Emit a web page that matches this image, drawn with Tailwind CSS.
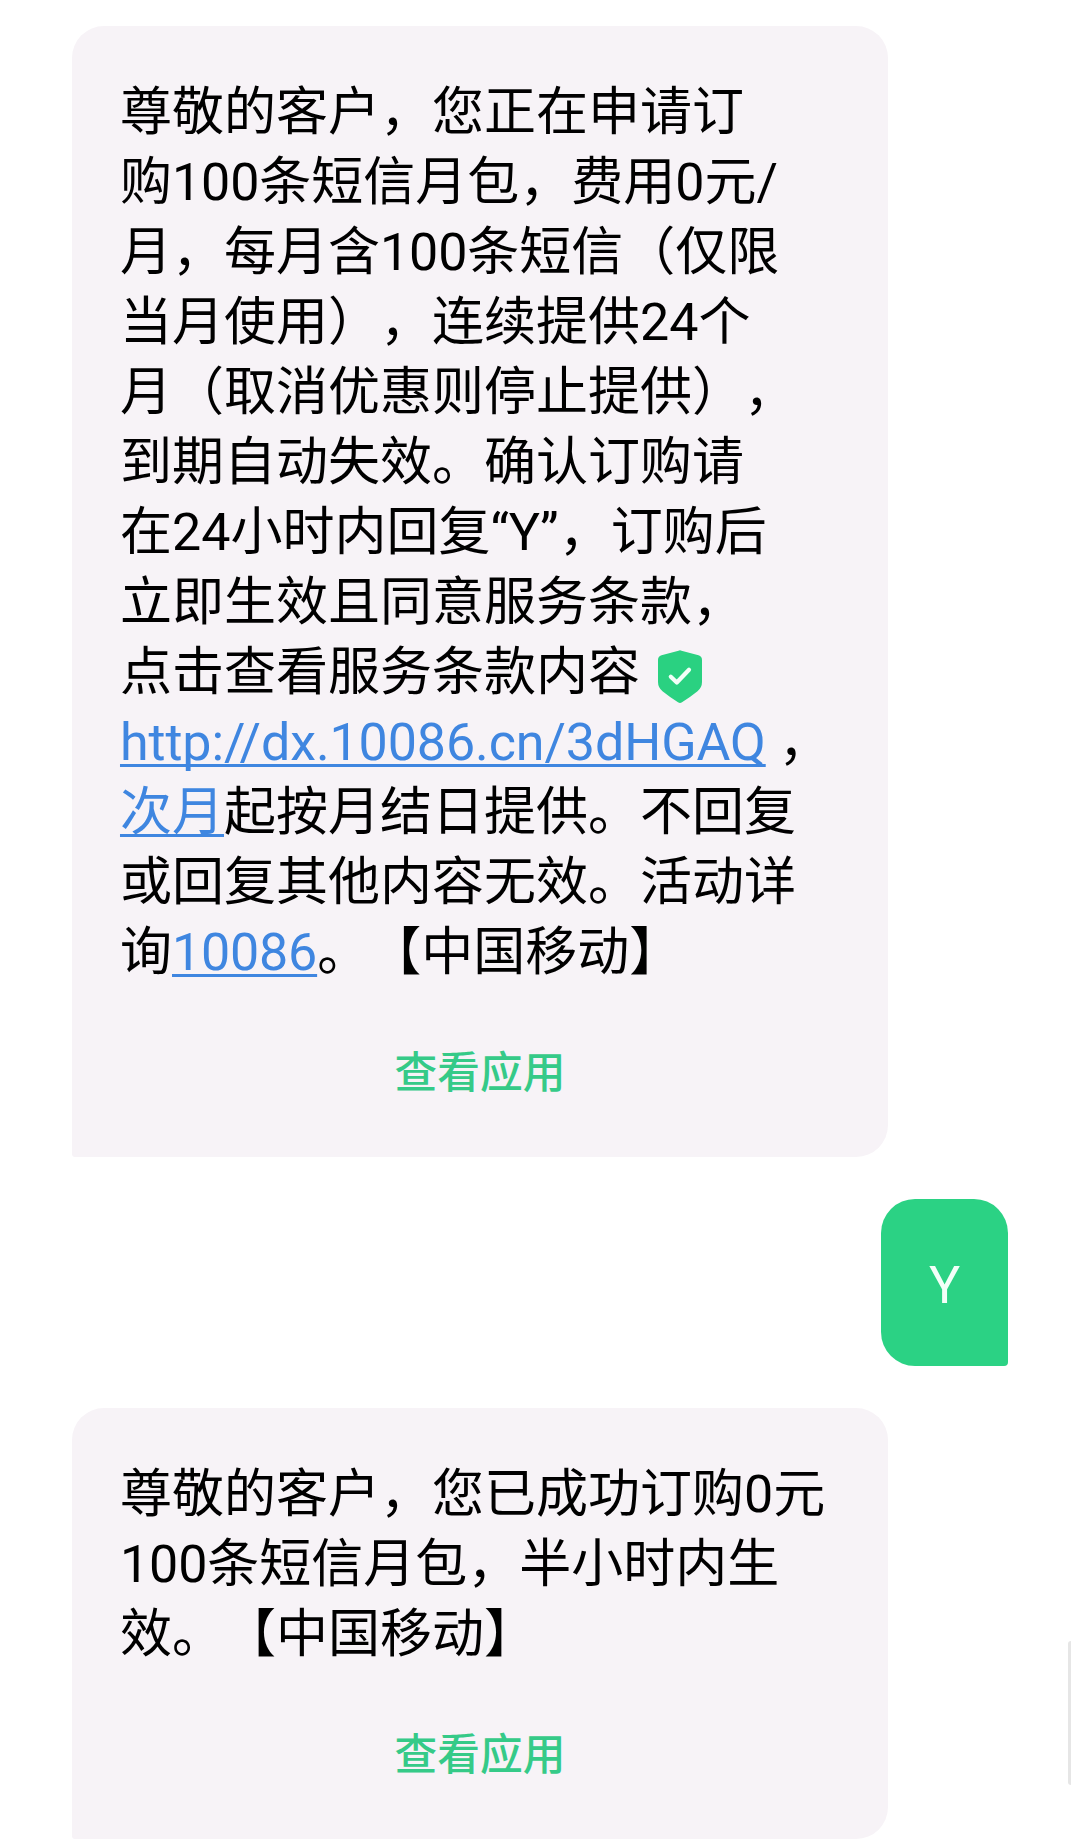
<!DOCTYPE html>
<html lang="zh-CN"><head><meta charset="utf-8"><title>短信</title><script src="https://cdn.jsdelivr.net/npm/@tailwindcss/browser@4"></script></head>
<body class="bg-white">
<main class="relative flex h-[1843px] w-[1071px] flex-col items-start overflow-hidden pt-[26px] font-[Roboto,'Noto_Sans_CJK_SC',sans-serif] text-black [text-spacing-trim:space-all]">
<section class="ml-[72.3px] flex h-[1131px] w-[815.4px] shrink-0 flex-col rounded-[32px] rounded-bl-[3px] bg-[#f7f3f7] pt-[52px]">
<div class="pl-[47.700px] text-[52px] leading-[70px] whitespace-nowrap">
<p>尊敬的客户，您正在申请订</p>
<p>购<span class="tracking-[-0.15px]">100</span>条短信月包，费用0元/</p>
<p>月，每月含<span class="tracking-[-0.15px]">100</span>条短信（仅限</p>
<p>当月使用），连续提供24个</p>
<p>月（取消优惠则停止提供），</p>
<p>到期自动失效。确认订购请</p>
<p>在24小时内回复“Y”，订购后</p>
<p>立即生效且同意服务条款，</p>
<p class="flex h-[70px]">点击查看服务条款内容<svg class="mt-[12px] ml-[17px] h-[54px] w-[46px]" viewBox="0 0 46 54"><path d="M21.500.7Q23 0 24.500.7L41.500 5.200Q45 6.200 45 10V32Q45 37.500 40.500 41.200Q33 47.200 25 52.300Q23 53.500 21 52.300Q13 47.200 5.500 41.200Q1 37.500 1 32V10Q1 6.200 4.500 5.200Z" fill="#2ad181"/><path d="m13.800 26.800 6 5.700L32 19.800" fill="none" stroke="#f2fff8" stroke-width="4.200" stroke-linecap="round" stroke-linejoin="round"/></svg></p>
<p><span class="tracking-[-0.1px] text-[#3f86e0] underline decoration-[2.5px] underline-offset-[4px] [text-decoration-skip-ink:none]">http://dx.10086.cn/3dHGAQ</span> ，</p>
<p><span class="text-[#3f86e0] underline decoration-[2.5px] underline-offset-[4px] [text-decoration-skip-ink:none]">次月</span>起按月结日提供。不回复</p>
<p>或回复其他内容无效。活动详</p>
<p>询<span class="tracking-[-0.2px] text-[#3f86e0] underline decoration-[2.5px] underline-offset-[4px] [text-decoration-skip-ink:none]">10086</span>。【中国移动】</p>
</div>
<button class="mt-[55px] h-[60px] text-center text-[42.700px] leading-[60px] font-medium text-[#35ca88]">查看应用</button>
</section>
<section class="mt-[42px] ml-[881px] flex h-[167px] w-[127px] shrink-0 items-center justify-center rounded-[34px] rounded-br-[4px] bg-[#2bd284] pt-[7px] text-[52px] leading-[70px] text-[#f2fff8]">Y</section>
<section class="mt-[42px] ml-[72.3px] flex h-[431px] w-[815.4px] shrink-0 flex-col rounded-[32px] rounded-bl-[3px] bg-[#f7f3f7] pt-[52px]">
<div class="pl-[47.700px] text-[52px] leading-[70px] whitespace-nowrap">
<p>尊敬的客户，您已成功订购0元</p>
<p><span class="tracking-[-0.15px]">100</span>条短信月包，半小时内生</p>
<p>效。【中国移动】</p>
</div>
<button class="mt-[55px] h-[60px] text-center text-[42.700px] leading-[60px] font-medium text-[#35ca88]">查看应用</button>
</section>
<div class="absolute top-[1641px] right-0 h-[144px] w-[3px] rounded-l-sm bg-[#e6e6e6]"></div>
</main></body></html>
